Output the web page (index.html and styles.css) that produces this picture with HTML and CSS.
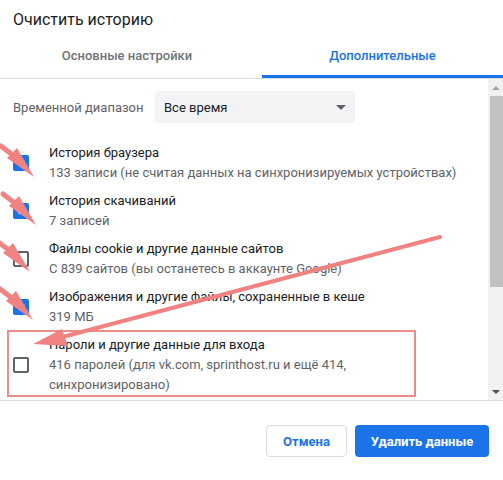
FILE: index.html
```html
<!DOCTYPE html>
<html lang="ru">
<head>
<meta charset="utf-8">
<link rel="stylesheet" href="styles.css">
</head>
<body>
<div class="dialog">
  <h1 class="title">Очистить историю</h1>
  <div class="tabs">
    <div class="tab first">Основные настройки</div>
    <div class="tab active">Дополнительные</div>
  </div>
  <div class="body">
    <div class="content">
      <div class="range">
        <span class="range-label">Временной диапазон</span>
        <div class="select"><span>Все время</span><span class="caret"></span></div>
      </div>
      <div class="item">
        <span class="cb checked"><svg viewBox="0 0 16 16"><path d="M3.5 8.2l3 3 6-6.2" fill="none" stroke="#fff" stroke-width="2"/></svg></span>
        <div class="texts"><div class="t">История браузера</div><div class="s">133 записи (не считая данных на синхронизируемых устройствах)</div></div>
      </div>
      <div class="item">
        <span class="cb checked"><svg viewBox="0 0 16 16"><path d="M3.5 8.2l3 3 6-6.2" fill="none" stroke="#fff" stroke-width="2"/></svg></span>
        <div class="texts"><div class="t">История скачиваний</div><div class="s">7 записей</div></div>
      </div>
      <div class="item">
        <span class="cb"></span>
        <div class="texts"><div class="t">Файлы cookie и другие данные сайтов</div><div class="s">С 839 сайтов (вы останетесь в аккаунте Google)</div></div>
      </div>
      <div class="item">
        <span class="cb checked"><svg viewBox="0 0 16 16"><path d="M3.5 8.2l3 3 6-6.2" fill="none" stroke="#fff" stroke-width="2"/></svg></span>
        <div class="texts"><div class="t">Изображения и другие файлы, сохраненные в кеше</div><div class="s">319 МБ</div></div>
      </div>
      <div class="item">
        <span class="cb"></span>
        <div class="texts"><div class="t">Пароли и другие данные для входа</div><div class="s">416 паролей (для vk.com, sprinthost.ru и ещё 414,<br>синхронизировано)</div></div>
      </div>
    </div>
    <div class="scrollbar">
      <span class="sb-btn up"></span>
      <div class="sb-track"><div class="sb-thumb"></div></div>
      <span class="sb-btn down"></span>
    </div>
  </div>
  <div class="footer">
    <button class="btn cancel">Отмена</button>
    <button class="btn primary">Удалить данные</button>
  </div>
</div>
<svg class="annot" width="503" height="480" viewBox="0 0 503 480">
  <defs>
    <g id="sa">
      <line x1="-33" y1="-31" x2="-20" y2="-21" stroke="#f08282" stroke-width="5" stroke-linecap="round"/>
      <polygon points="0,0 -27,-19 -17,-29" fill="#f08282"/>
    </g>
  </defs>
  <rect x="8" y="331" width="407" height="65" fill="none" stroke-width="2" stroke="#e88c8c"/>
  <line x1="440" y1="237" x2="55" y2="339" stroke="#f08282" stroke-width="4" stroke-linecap="round"/>
  <polygon points="33,344 62,329 68,346" fill="#f08282"/>
  <use href="#sa" transform="translate(34,177)"/>
  <use href="#sa" transform="translate(36,225)"/>
  <use href="#sa" transform="translate(30,272)"/>
  <use href="#sa" transform="translate(33,320)"/>
</svg>
</body>
</html>
```

FILE: styles.css
```css
* { box-sizing: border-box; }
html, body { margin: 0; padding: 0; background: #fff; }
body {
  width: 503px;
  height: 480px;
  position: relative;
  overflow: hidden;
  font-family: Roboto, "Noto Sans", Arial, sans-serif;
  color: #202124;
}
.dialog { display: flex; flex-direction: column; height: 480px; }
.title {
  margin: 0;
  padding: 10px 13px 0;
  height: 38px;
  font-size: 16px;
  font-weight: 400;
  line-height: 20px;
  color: #202124;
}
.tabs {
  display: flex;
  height: 41px;
  border-bottom: 1px solid #dadce0;
}
.tab {
  display: flex;
  align-items: center;
  justify-content: center;
  font-size: 13px;
  font-weight: 500;
  color: #6f7378;
  padding-bottom: 2px;
  border-bottom: 3px solid transparent;
}
.tab.first { width: 262px; padding-right: 8px; }
.tab.active { flex: 1; color: #1a73e8; border-bottom-color: #1a73e8; }
.body {
  display: flex;
  height: 322px;
  border-bottom: 1px solid #dadce0;
  overflow: hidden;
}
.content { flex: 1; padding: 12px 0 0 13px; overflow: hidden; }
.range { display: flex; align-items: center; height: 32px; }
.range-label { font-size: 13px; color: #5f6368; width: 142px; }
.select {
  width: 200px;
  height: 32px;
  background: #f1f3f4;
  border-radius: 4px;
  display: flex;
  align-items: center;
  justify-content: space-between;
  padding: 0 9px 0 9px;
  font-size: 13px;
  color: #202124;
}
.caret {
  width: 0; height: 0;
  border-left: 5px solid transparent;
  border-right: 5px solid transparent;
  border-top: 5px solid #5f6368;
}
.item {
  display: flex;
  align-items: center;
  margin-top: 8px;
}
.range + .item { margin-top: 20px; }
.cb {
  width: 16px; height: 16px;
  border: 2px solid #5f6368;
  border-radius: 2px;
  flex: none;
  margin-right: 20px;
  display: flex;
}
.cb.checked { background: #1a73e8; border-color: #1a73e8; }
.cb svg { width: 12px; height: 12px; }
.texts { font-size: 13px; line-height: 20px; }
.t { color: #202124; }
.s { color: #5f6368; }
.scrollbar {
  width: 15px;
  flex: none;
  background: #f1f1f1;
  display: flex;
  flex-direction: column;
  align-items: center;
}
.sb-btn { height: 17px; width: 15px; display: flex; align-items: center; justify-content: center; }
.sb-btn.up::before {
  content: ""; border-left: 4px solid transparent; border-right: 4px solid transparent; border-bottom: 4px solid #a3a3a3;
}
.sb-btn.down::before {
  content: ""; border-left: 4px solid transparent; border-right: 4px solid transparent; border-top: 4px solid #505050;
}
.sb-track { flex: 1; width: 100%; padding-left: 2px; }
.sb-thumb { height: 191px; background: #c1c1c1; }
.footer {
  flex: 1;
  display: flex;
  justify-content: flex-end;
  align-items: flex-start;
  gap: 8px;
  padding: 24px 14px 0 0;
}
.btn {
  height: 32px;
  border-radius: 4px;
  font-family: Roboto, "Noto Sans", Arial, sans-serif;
  font-size: 13px;
  font-weight: 700;
  padding: 0 15px;
}
.cancel { background: #fff; color: #1a73e8; border: 1px solid #dadce0; width: 81px; }
.primary { background: #1a73e8; color: #fff; border: none; width: 134px; }
.annot { position: absolute; left: 0; top: 0; pointer-events: none; }
```
